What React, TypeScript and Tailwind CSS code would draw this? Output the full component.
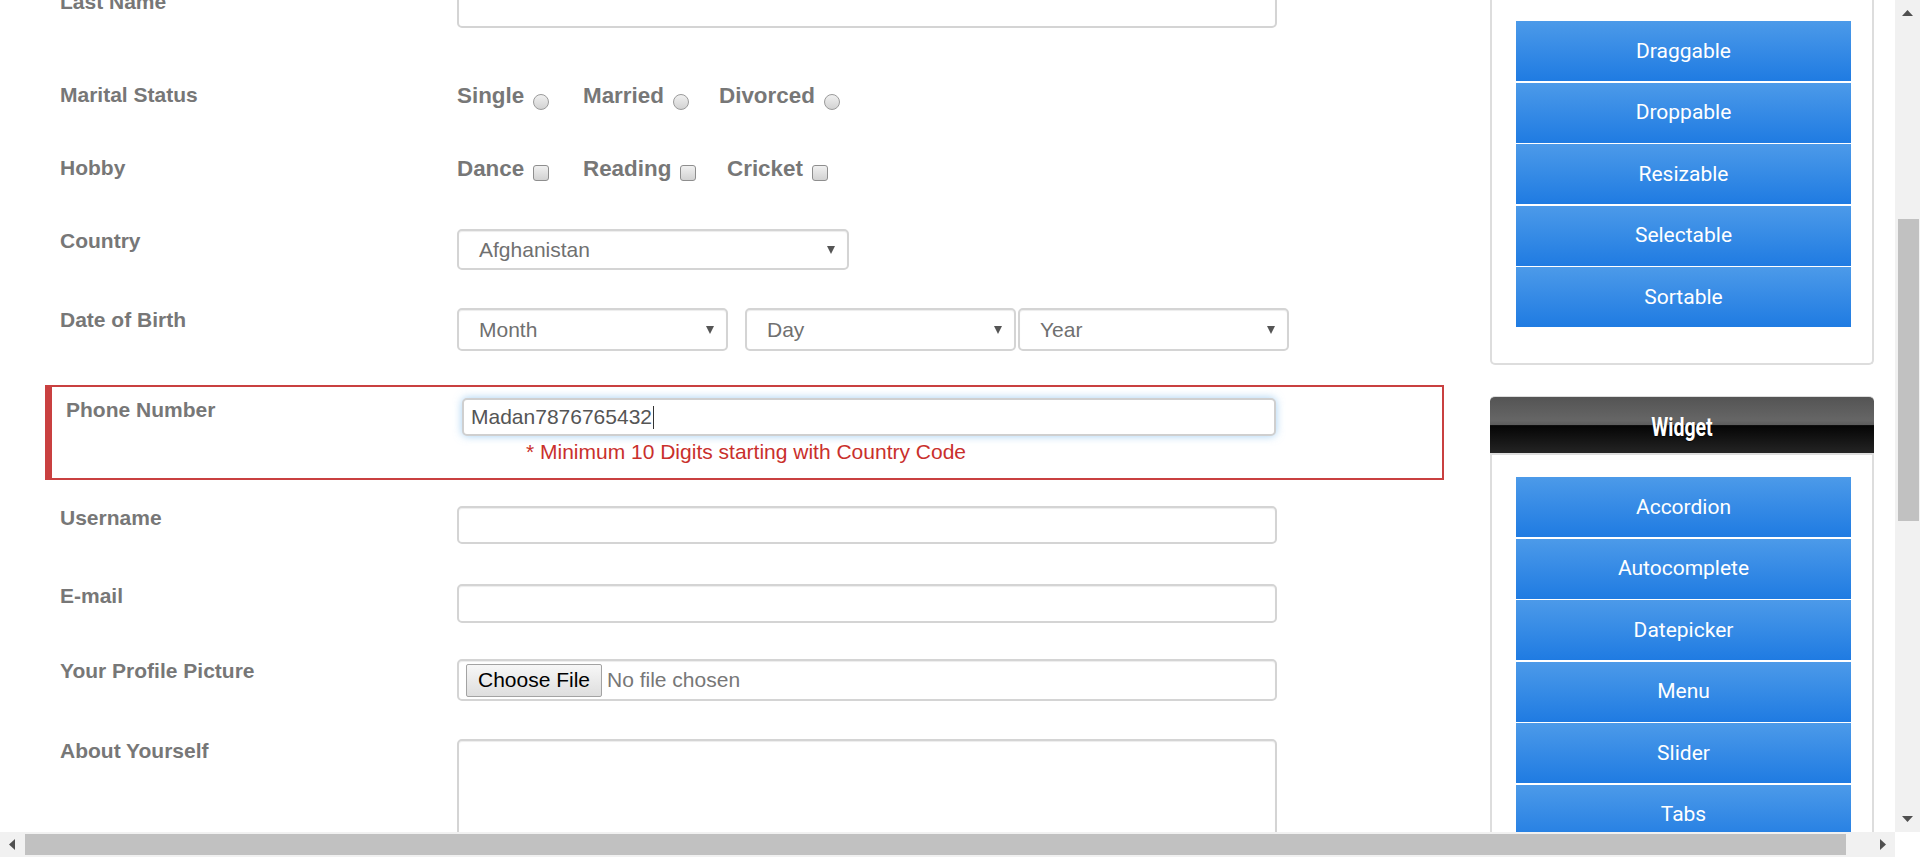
import React from 'react';

const font = "font-['Liberation_Sans',Arial,sans-serif]";
const labelCls = `shrink-0 ${font} text-[21px] leading-[24px] font-bold text-[#777]`;
const boxCls = 'rounded-[5px] border-2 border-[#d4d4d4] bg-white shadow-[inset_0_1px_1px_rgba(0,0,0,0.075)]';

const Caret: React.FC = () => (
  <svg width="8" height="9" viewBox="0 0 8 9" className="shrink-0">
    <polygon points="0,1 8,1 4,9" fill="#555" />
  </svg>
);

const FakeSelect: React.FC<{ text: string; className: string }> = ({ text, className }) => (
  <div className={`flex items-center justify-between pl-[20px] pr-[12px] ${boxCls} ${className}`}>
    <span className={`${font} text-[21px] text-[#707070]`}>{text}</span>
    <Caret />
  </div>
);

const Radio: React.FC = () => (
  <span className="ml-[9px] mt-[11px] h-[16px] w-[16px] shrink-0 rounded-full border border-[#9a9a9a] bg-[linear-gradient(to_bottom,#f0f0f0,#d2d2d2)]" />
);

const Check: React.FC = () => (
  <span className="ml-[9px] mt-[9px] h-[16px] w-[16px] shrink-0 rounded-[3px] border border-[#8e8e8e] bg-[linear-gradient(to_bottom,#f0f0f0,#d2d2d2)]" />
);

const Option: React.FC<{ text: string; className?: string; children: React.ReactNode }> = ({ text, className = '', children }) => (
  <div className={`flex items-start ${className}`}>
    <span className={`${font} text-[22.4px] leading-[26px] font-bold text-[#777]`}>{text}</span>
    {children}
  </div>
);

const NavButton: React.FC<{ text: string }> = ({ text }) => (
  <div className="flex h-[60px] w-[335px] items-center justify-center bg-[linear-gradient(to_bottom,#4c9ae9,#1f7be2)] pt-px font-['Roboto',sans-serif] text-[21px] text-white">
    {text}
  </div>
);

const Arrow: React.FC<{ dir: 'up' | 'down' | 'left' | 'right' }> = ({ dir }) => {
  const pts = {
    up: '0,6 11,6 5.5,0',
    down: '0,0 11,0 5.5,6',
    left: '6,0 6,11 0,5.5',
    right: '0,0 0,11 6,5.5',
  }[dir];
  const vertical = dir === 'up' || dir === 'down';
  return (
    <svg width={vertical ? 11 : 6} height={vertical ? 6 : 11} viewBox={vertical ? '0 0 11 6' : '0 0 6 11'}>
      <polygon points={pts} fill="#505050" />
    </svg>
  );
};

export default function App() {
  return (
    <div className="flex h-[857px] w-[1920px] flex-col overflow-hidden bg-white">
      <div className="flex h-[832px]">
        {/* page content, scrolled */}
        <div className="flex w-[1895px] overflow-hidden">
          {/* form */}
          <div className="ml-[45px] w-[1399px] shrink-0">
            <div className="-mt-[10px]">
              <div className="flex h-[92.5px] items-start pl-[15px]">
                <div className={`${labelCls} w-[397px]`}>Last Name</div>
                <div className={`h-[38px] w-[820px] ${boxCls}`} />
              </div>

              <div className="flex h-[73.5px] items-start pl-[15px]">
                <div className={`${labelCls} w-[397px]`}>Marital Status</div>
                <Option text="Single" className="w-[126px]"><Radio /></Option>
                <Option text="Married" className="w-[136px]"><Radio /></Option>
                <Option text="Divorced"><Radio /></Option>
              </div>

              <div className="flex h-[73px] items-start pl-[15px]">
                <div className={`${labelCls} w-[397px]`}>Hobby</div>
                <Option text="Dance" className="w-[126px]"><Check /></Option>
                <Option text="Reading" className="w-[144px]"><Check /></Option>
                <Option text="Cricket"><Check /></Option>
              </div>

              <div className="flex h-[79px] items-start pl-[15px]">
                <div className={`${labelCls} w-[397px]`}>Country</div>
                <FakeSelect text="Afghanistan" className="h-[41px] w-[392px]" />
              </div>

              <div className="flex h-[77px] items-start pl-[15px]">
                <div className={`${labelCls} w-[397px]`}>Date of Birth</div>
                <FakeSelect text="Month" className="h-[43px] w-[271px]" />
                <FakeSelect text="Day" className="ml-[17px] h-[43px] w-[271px]" />
                <FakeSelect text="Year" className="ml-[2px] h-[43px] w-[271px]" />
              </div>

              {/* invalid field */}
              <div className="mb-[26px] flex h-[95px] items-start border-2 border-l-[7px] border-[#c94040] pl-[14px] pt-[11px]">
                <div className={`${labelCls} w-[396px]`}>Phone Number</div>
                <div>
                  <div className="flex h-[38px] w-[814px] items-center rounded-[5px] border-2 border-[#cfcfcf] bg-white pl-[7px] shadow-[0_0_8px_rgba(102,175,233,0.6)]">
                    <span className={`${font} text-[21px] text-[#555]`}>Madan7876765432</span>
                    <span className="ml-px h-[23px] w-px bg-[#333]" />
                  </div>
                  <div className={`ml-[64px] mt-[5px] ${font} text-[21px] leading-[22px] text-[#c9302c]`}>
                    * Minimum 10 Digits starting with Country Code
                  </div>
                </div>
              </div>

              <div className="flex h-[77.5px] items-start pl-[15px]">
                <div className={`${labelCls} w-[397px]`}>Username</div>
                <div className={`h-[38px] w-[820px] ${boxCls}`} />
              </div>

              <div className="flex h-[75.5px] items-start pl-[15px]">
                <div className={`${labelCls} w-[397px]`}>E-mail</div>
                <div className={`h-[39px] w-[820px] ${boxCls}`} />
              </div>

              <div className="flex h-[80px] items-start pl-[15px]">
                <div className={`${labelCls} w-[397px]`}>Your Profile Picture</div>
                <div className={`flex h-[42px] w-[820px] items-center pl-[7px] ${boxCls}`}>
                  <span className={`flex h-[33px] w-[136px] items-center justify-center rounded-[2px] border border-[#a3a3a3] bg-[linear-gradient(to_bottom,#f7f7f7,#dedede)] ${font} text-[21px] text-black`}>
                    Choose File
                  </span>
                  <span className={`ml-[5px] ${font} text-[21px] text-[#777]`}>No file chosen</span>
                </div>
              </div>

              <div className="flex items-start pl-[15px]">
                <div className={`${labelCls} w-[397px]`}>About Yourself</div>
                <div className={`h-[220px] w-[820px] ${boxCls}`} />
              </div>
            </div>
          </div>

          {/* sidebar */}
          <div className="ml-[46px] w-[384px] shrink-0">
            <div className="h-[365px] rounded-b-[5px] border-2 border-t-0 border-[#dddddd] pl-[24px] pt-[21px]">
              <div className="flex flex-col gap-[1.5px]">
                {['Draggable', 'Droppable', 'Resizable', 'Selectable', 'Sortable'].map((t) => (
                  <NavButton key={t} text={t} />
                ))}
              </div>
            </div>

            <div className="mt-[31px]">
              <div className="flex h-[57px] items-center justify-center rounded-t-[5px] border-t border-[#dddddd] bg-[linear-gradient(to_bottom,#545454_0%,#666666_42%,#5c5c5c_50%,#050505_51%,#242424_100%)] pt-[4px]">
                <span className="inline-block scale-x-75 font-['Roboto',sans-serif] text-[26px] font-bold text-white [text-shadow:0_1px_1px_rgba(0,0,0,0.6)]">
                  Widget
                </span>
              </div>
              <div className="border-2 border-[#dddddd] pl-[24px] pt-[22px]">
                <div className="flex flex-col gap-[1.5px]">
                  {['Accordion', 'Autocomplete', 'Datepicker', 'Menu', 'Slider', 'Tabs', 'Tooltip'].map((t) => (
                    <NavButton key={t} text={t} />
                  ))}
                </div>
              </div>
            </div>
          </div>
        </div>

        {/* vertical scrollbar */}
        <div className="flex w-[25px] flex-col items-center bg-[#f1f1f1]">
          <div className="flex h-[25px] items-start justify-center pt-[10px]">
            <Arrow dir="up" />
          </div>
          <div className="ml-px mt-[194px] h-[302px] w-[21px] bg-[#c1c1c1]" />
          <div className="flex-1" />
          <div className="flex h-[25px] items-start justify-center pt-[9px]">
            <Arrow dir="down" />
          </div>
        </div>
      </div>

      {/* horizontal scrollbar */}
      <div className="flex h-[25px]">
        <div className="flex w-[1895px] items-center bg-[#f1f1f1]">
          <div className="flex w-[25px] items-center justify-center pr-[2px]">
            <Arrow dir="left" />
          </div>
          <div className="h-[21px] w-[1821px] bg-[#c1c1c1]" />
          <div className="flex-1" />
          <div className="flex w-[49px] items-center justify-end pr-[9px]">
            <Arrow dir="right" />
          </div>
        </div>
        <div className="w-[25px] bg-white" />
      </div>
    </div>
  );
}
